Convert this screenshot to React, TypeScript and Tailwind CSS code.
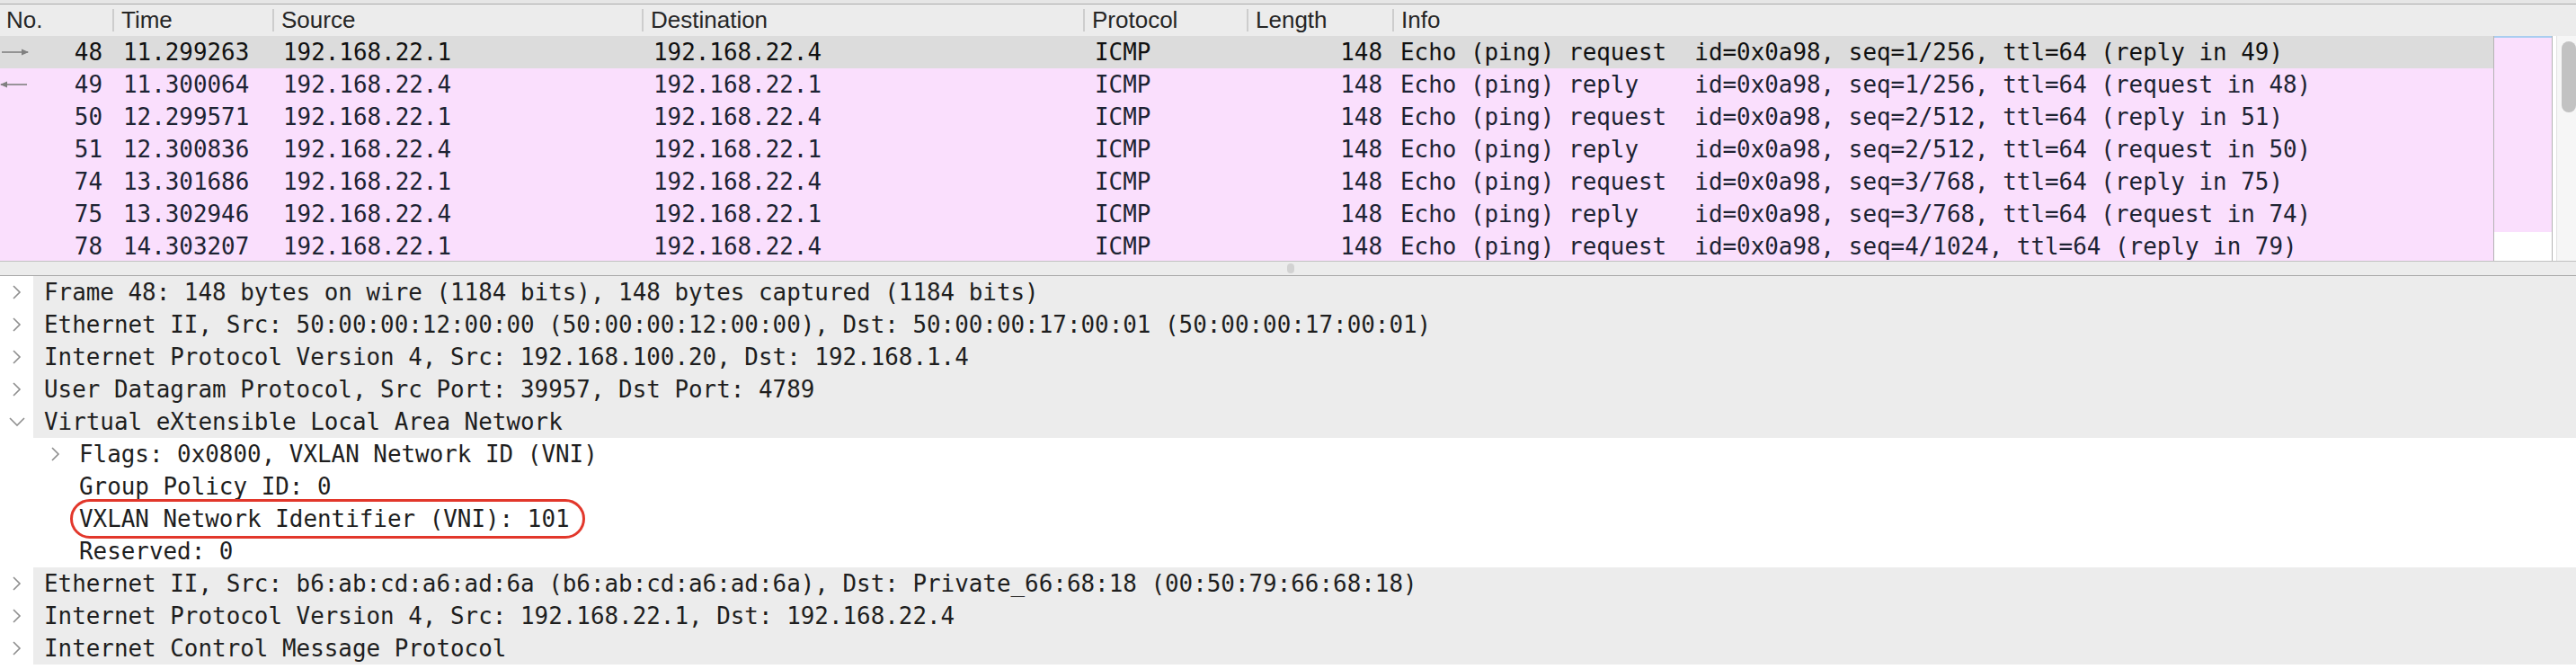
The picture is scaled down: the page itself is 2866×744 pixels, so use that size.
import React from "react";

const mono = "font-['DejaVu_Sans_Mono',monospace] text-[25.9px]";

const cols = [
  { name: "No.", w: "w-[125px]" },
  { name: "Time", w: "w-[178px]" },
  { name: "Source", w: "w-[411px]" },
  { name: "Destination", w: "w-[491px]" },
  { name: "Protocol", w: "w-[182px]" },
  { name: "Length", w: "w-[162px]" },
  { name: "Info", w: "flex-1" },
];

const packets = [
  { no: "48", time: "11.299263", src: "192.168.22.1", dst: "192.168.22.4", info: "Echo (ping) request  id=0x0a98, seq=1/256, ttl=64 (reply in 49)", arrow: "right" },
  { no: "49", time: "11.300064", src: "192.168.22.4", dst: "192.168.22.1", info: "Echo (ping) reply    id=0x0a98, seq=1/256, ttl=64 (request in 48)", arrow: "left" },
  { no: "50", time: "12.299571", src: "192.168.22.1", dst: "192.168.22.4", info: "Echo (ping) request  id=0x0a98, seq=2/512, ttl=64 (reply in 51)" },
  { no: "51", time: "12.300836", src: "192.168.22.4", dst: "192.168.22.1", info: "Echo (ping) reply    id=0x0a98, seq=2/512, ttl=64 (request in 50)" },
  { no: "74", time: "13.301686", src: "192.168.22.1", dst: "192.168.22.4", info: "Echo (ping) request  id=0x0a98, seq=3/768, ttl=64 (reply in 75)" },
  { no: "75", time: "13.302946", src: "192.168.22.4", dst: "192.168.22.1", info: "Echo (ping) reply    id=0x0a98, seq=3/768, ttl=64 (request in 74)" },
  { no: "78", time: "14.303207", src: "192.168.22.1", dst: "192.168.22.4", info: "Echo (ping) request  id=0x0a98, seq=4/1024, ttl=64 (reply in 79)" },
];

type Detail = { text: string; level: number; chevron?: "right" | "down"; mark?: boolean };

const details: Detail[] = [
  { text: "Frame 48: 148 bytes on wire (1184 bits), 148 bytes captured (1184 bits)", level: 0, chevron: "right" },
  { text: "Ethernet II, Src: 50:00:00:12:00:00 (50:00:00:12:00:00), Dst: 50:00:00:17:00:01 (50:00:00:17:00:01)", level: 0, chevron: "right" },
  { text: "Internet Protocol Version 4, Src: 192.168.100.20, Dst: 192.168.1.4", level: 0, chevron: "right" },
  { text: "User Datagram Protocol, Src Port: 39957, Dst Port: 4789", level: 0, chevron: "right" },
  { text: "Virtual eXtensible Local Area Network", level: 0, chevron: "down" },
  { text: "Flags: 0x0800, VXLAN Network ID (VNI)", level: 1, chevron: "right" },
  { text: "Group Policy ID: 0", level: 1 },
  { text: "VXLAN Network Identifier (VNI): 101", level: 1, mark: true },
  { text: "Reserved: 0", level: 1 },
  { text: "Ethernet II, Src: b6:ab:cd:a6:ad:6a (b6:ab:cd:a6:ad:6a), Dst: Private_66:68:18 (00:50:79:66:68:18)", level: 0, chevron: "right" },
  { text: "Internet Protocol Version 4, Src: 192.168.22.1, Dst: 192.168.22.4", level: 0, chevron: "right" },
  { text: "Internet Control Message Protocol", level: 0, chevron: "right" },
];

function Chevron({ dir }: { dir: "right" | "down" }) {
  if (dir === "down") {
    return (
      <svg width="18" height="10" viewBox="0 0 18 10" className="shrink-0">
        <polyline points="1,1 9,9 17,1" fill="none" stroke="#8e8e8e" strokeWidth="1.6" />
      </svg>
    );
  }
  return (
    <svg width="10" height="16" viewBox="0 0 10 16" className="shrink-0">
      <polyline points="1,1 8,8 1,15" fill="none" stroke="#8e8e8e" strokeWidth="1.6" />
    </svg>
  );
}

function Arrow({ dir }: { dir: string }) {
  return (
    <svg width="34" height="10" viewBox="0 0 34 10" className="shrink-0">
      {dir === "right" ? (
        <>
          <line x1="2" y1="5" x2="31" y2="5" stroke="#808080" strokeWidth="1.6" />
          <polygon points="32,5 24,1.5 24,8.5" fill="#808080" />
        </>
      ) : (
        <>
          <line x1="1" y1="5" x2="30" y2="5" stroke="#808080" strokeWidth="1.6" />
          <polygon points="0,5 8,1.5 8,8.5" fill="#808080" />
        </>
      )}
    </svg>
  );
}

export default function App() {
  return (
    <div className="w-[2866px] h-[744px] bg-white overflow-hidden flex flex-col">
      <div className="h-[4px] bg-[#e6e6e6] border-b border-[#ababab] box-content" />

      {/* column header */}
      <div className="h-[35px] bg-[#ececec] flex items-center font-['Liberation_Sans',sans-serif] text-[26px] text-[#262626]">
        {cols.map((c, i) => (
          <div key={c.name} className={`${c.w} flex items-center h-full`}>
            {i > 0 && <div className="w-[2px] h-[25px] bg-[#cdcdcd]" />}
            <span className={i > 0 ? "ml-[8px]" : "ml-[7px]"}>{c.name}</span>
          </div>
        ))}
      </div>

      {/* packet list */}
      <div className="h-[250px] flex overflow-hidden">
        <div className={`w-[2776px] flex flex-col ${mono}`}>
          {packets.map((p, i) => (
            <div
              key={p.no}
              className={`h-[36px] shrink-0 flex items-center whitespace-pre ${
                i === 0 ? "bg-[#dcdcdc] text-[#111111]" : "bg-[#fadffd] text-[#1d2333]"
              }`}
            >
              <div className="w-[125px] flex items-center pr-[11px]">
                {p.arrow ? <Arrow dir={p.arrow} /> : null}
                <span className="ml-auto">{p.no}</span>
              </div>
              <div className="w-[178px] pl-[12px]">{p.time}</div>
              <div className="w-[411px] pl-[12px]">{p.src}</div>
              <div className="w-[491px] pl-[13px]">{p.dst}</div>
              <div className="w-[182px] pl-[13px]">ICMP</div>
              <div className="w-[162px] pr-[11px] text-right">148</div>
              <div className="flex-1 pl-[9px]">{p.info}</div>
            </div>
          ))}
        </div>
        <div className="w-[66px] flex flex-col border-x border-[#b4b4b4]">
          <div className="h-[2px] bg-[#a9cdf0]" />
          <div className="h-[216px] bg-[#fadffd]" />
          <div className="flex-1 bg-white" />
        </div>
        <div className="flex-1 bg-white pl-[4px]">
          <div className="h-full bg-[#f6f6f6] border-l border-[#e2e2e2] pt-[6px] pl-[5px]">
            <div className="w-[16px] h-[79px] bg-[#c2c2c2] rounded-full" />
          </div>
        </div>
      </div>

      {/* splitter */}
      <div className="h-[15px] bg-[#ececec] border-y border-t-[#c2c2c2] border-b-[#a8a8a8] box-content flex items-center justify-center">
        <div className="w-[8px] h-[11px] rounded-full bg-[#d2d2d2] ml-[6px]" />
      </div>

      {/* packet details */}
      <div className={`flex flex-col ${mono} text-[#1e1e1e]`}>
        {details.map((d, i) => (
          <div key={i} className="h-[36px] shrink-0 flex items-center whitespace-pre">
            <div className="w-[37px] h-full flex items-center justify-center">
              {d.level === 0 && d.chevron ? <Chevron dir={d.chevron} /> : null}
            </div>
            {d.level === 0 ? (
              <div className="flex-1 h-full bg-[#ececec] flex items-center pl-[12px]">{d.text}</div>
            ) : (
              <div className="flex-1 h-full flex items-center pl-[12px] relative">
                <div className="w-[39px] flex items-center pl-[8px]">
                  {d.chevron ? <Chevron dir={d.chevron} /> : null}
                </div>
                <span>{d.text}</span>
                {d.mark && (
                  <span className="absolute left-[41px] top-[-4px] w-[573px] h-[44px] border-[3px] border-[#e2372b] rounded-full" />
                )}
              </div>
            )}
          </div>
        ))}
      </div>
    </div>
  );
}
